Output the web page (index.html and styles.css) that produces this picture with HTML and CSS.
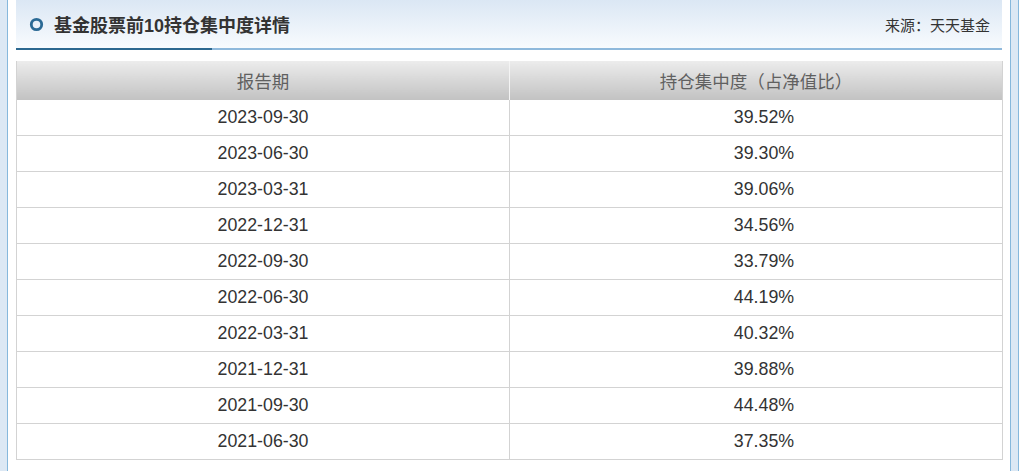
FILE: index.html
```html
<!DOCTYPE html>
<html lang="zh-CN">
<head>
<meta charset="utf-8">
<title>基金股票前10持仓集中度详情</title>
<link rel="stylesheet" href="styles.css">
</head>
<body>
<div class="page">
  <div class="strip-left"></div>
  <main class="main">
    <div class="panel-head">
      <div class="title">
        <svg class="bullet" width="15" height="15" viewBox="0 0 15 15"><circle cx="7.5" cy="7.5" r="5.2" fill="none" stroke="#2b6a95" stroke-width="2.8"/></svg>
        <span>基金股票前10持仓集中度详情</span>
      </div>
      <div class="source">来源：天天基金</div>
    </div>
    <div class="underline"><div class="underline-dark"></div></div>
    <table class="grid">
      <thead>
        <tr><th>报告期</th><th>持仓集中度（占净值比）</th></tr>
      </thead>
      <tbody>
        <tr><td>2023-09-30</td><td>39.52%</td></tr>
        <tr><td>2023-06-30</td><td>39.30%</td></tr>
        <tr><td>2023-03-31</td><td>39.06%</td></tr>
        <tr><td>2022-12-31</td><td>34.56%</td></tr>
        <tr><td>2022-09-30</td><td>33.79%</td></tr>
        <tr><td>2022-06-30</td><td>44.19%</td></tr>
        <tr><td>2022-03-31</td><td>40.32%</td></tr>
        <tr><td>2021-12-31</td><td>39.88%</td></tr>
        <tr><td>2021-09-30</td><td>44.48%</td></tr>
        <tr><td>2021-06-30</td><td>37.35%</td></tr>
      </tbody>
    </table>
  </main>
  <div class="strip-right"></div>
</div>
</body>
</html>
```

FILE: styles.css
```css
html, body {
  margin: 0;
  padding: 0;
  background: #ffffff;
}
body {
  font-family: "Liberation Sans", Arial, "Noto Sans CJK SC", sans-serif;
  color: #333333;
}
.page {
  display: flex;
  height: 471px;
  overflow: hidden;
}
.strip-left {
  width: 7px;
  flex: none;
  background: #dce8f4;
  border-right: 1px solid #86b8dc;
}
.main {
  width: 986px;
  flex: none;
  padding: 0 8px 0 8px;
}
.strip-right {
  width: 7px;
  flex: none;
  background: #dce8f4;
  border-left: 1px solid #86b8dc;
  border-right: 1px solid #86b8dc;
}
.panel-head {
  height: 48px;
  display: flex;
  align-items: center;
  justify-content: space-between;
  padding: 0 12px 0 13px;
  background: linear-gradient(to bottom, #dbe7f4 0%, #f8fbfe 100%);
}
.title {
  display: flex;
  align-items: center;
  gap: 10px;
  font-size: 18px;
  font-weight: bold;
  color: #333333;
}
.bullet {
  display: block;
}
.source {
  font-size: 15px;
  color: #333333;
}
.underline {
  height: 2px;
  background: #8fb9dc;
}
.underline-dark {
  width: 196px;
  height: 2px;
  background: #2c6890;
}
.grid {
  margin-top: 11px;
  width: 987px;
  border-collapse: collapse;
  table-layout: fixed;
  border-left: 1px solid #d3d3d3;
  border-right: 1px solid #d3d3d3;
}
.grid th {
  height: 39px;
  padding: 0;
  font-weight: normal;
  font-size: 17.5px;
  color: #606060;
  background: linear-gradient(to bottom, #ececec 0%, #c2c2c2 100%);
  text-align: center;
  vertical-align: middle;
}
.grid th:first-child {
  width: 492px;
  border-right: 1px solid #f4f4f4;
}
.grid td {
  height: 35px;
  padding: 0;
  font-size: 17.8px;
  text-align: center;
  vertical-align: middle;
  border-bottom: 1px solid #d3d3d3;
}
.grid td:first-child {
  border-right: 1px solid #d3d3d3;
}
.grid td + td {
  padding-left: 16px;
}
```
